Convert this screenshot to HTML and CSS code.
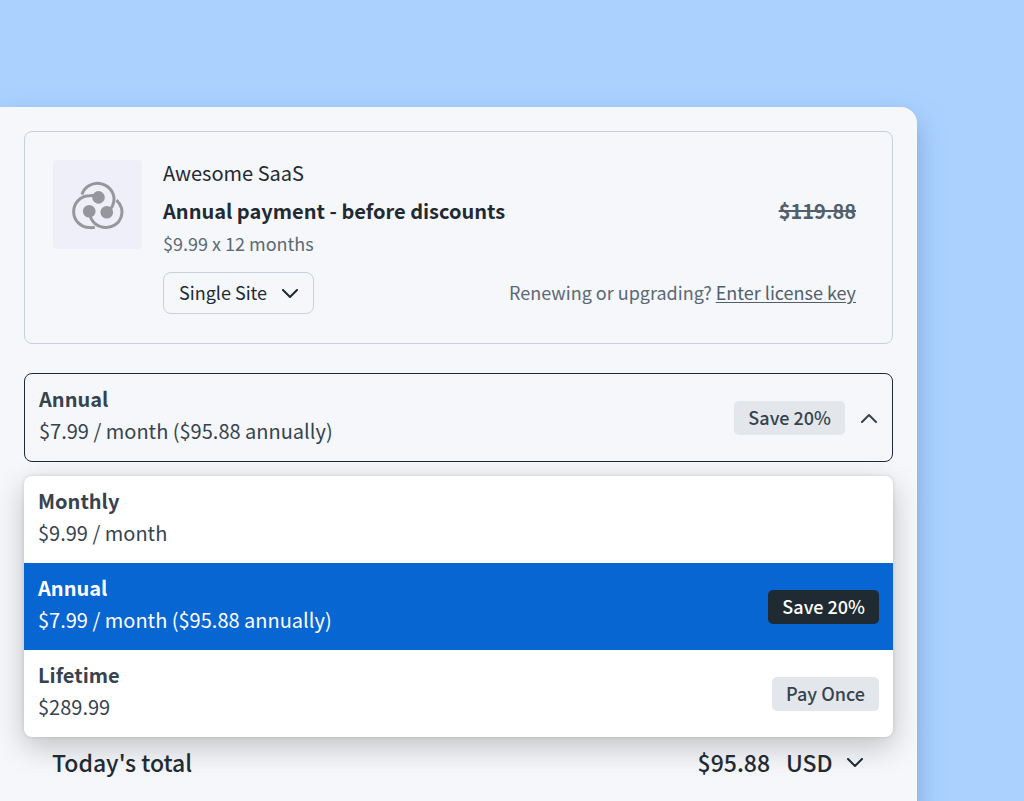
FILE: index.html
```html
<!DOCTYPE html>
<html lang="en">
<head>
    <meta charset="UTF-8">
    <meta name="viewport" content="width=device-width, initial-scale=1.0">
    <title>Checkout - Awesome SaaS</title>
    <link rel="stylesheet" href="styles.css">
</head>
<body>
    <main class="checkout">
        <!-- Product summary -->
        <section class="product">
            <div class="product-logo">
                <svg viewBox="26 26 160 156" width="53" height="52" fill="none" stroke="#96969e" stroke-width="9" aria-hidden="true">
                    <path d="M59 72A50 50 0 0 1 156 84C156 103 148 116 135 125"/>
                    <path d="M108 80C100 75 90 75 82 76A48 48 0 0 0 82 172Q90 173 98 171"/>
                    <path d="M82 125C84 155 105 172 132 172A47 47 0 0 0 163 89"/>
                    <g fill="#96969e" stroke="none">
                        <circle cx="109" cy="81" r="19"/>
                        <circle cx="81" cy="123" r="19"/>
                        <circle cx="134" cy="126" r="19"/>
                    </g>
                </svg>
            </div>
            <div class="product-info">
                <p class="product-name">Awesome SaaS</p>
                <div class="row product-payment">
                    <h2>Annual payment - before discounts</h2>
                    <s>$119.88</s>
                </div>
                <p class="product-note">$9.99 x 12 months</p>
                <div class="row product-license">
                    <div class="select">
                        <select aria-label="License">
                            <option>Single Site</option>
                        </select>
                        <svg class="chevron" viewBox="0 0 18 10" aria-hidden="true"><path d="M2 1l7 7 7-7"/></svg>
                    </div>
                    <p>Renewing or upgrading? <a href="#license">Enter license key</a></p>
                </div>
            </div>
        </section>

        <!-- Billing cycle picker -->
        <section class="cycle">
            <button class="cycle-toggle" type="button" aria-haspopup="listbox" aria-expanded="true" aria-controls="cycles">
                <span class="plan"><strong>Annual</strong><span>$7.99 / month ($95.88 annually)</span></span>
                <span class="badge">Save 20%</span>
                <svg class="chevron" viewBox="0 0 18 10" aria-hidden="true"><path d="M2 9l7-7 7 7"/></svg>
            </button>
            <div class="cycle-menu" id="cycles" role="listbox" aria-label="Billing cycle">
                <button class="cycle-option" type="button" role="option" aria-selected="false">
                    <span class="plan"><strong>Monthly</strong><span>$9.99 / month</span></span>
                </button>
                <button class="cycle-option selected" type="button" role="option" aria-selected="true">
                    <span class="plan"><strong>Annual</strong><span>$7.99 / month ($95.88 annually)</span></span>
                    <span class="badge">Save 20%</span>
                </button>
                <button class="cycle-option" type="button" role="option" aria-selected="false">
                    <span class="plan"><strong>Lifetime</strong><span>$289.99</span></span>
                    <span class="badge">Pay Once</span>
                </button>
            </div>
        </section>

        <!-- Total -->
        <section class="total">
            <h2>Today's total</h2>
            <span class="amount">$95.88</span>
            <div class="select currency">
                <select aria-label="Currency">
                    <option>USD</option>
                </select>
                <svg class="chevron" viewBox="0 0 18 10" aria-hidden="true"><path d="M2 1l7 7 7-7"/></svg>
            </div>
        </section>
    </main>
</body>
</html>
```
FILE: styles.css
```css
* { box-sizing: border-box; }

body {
    margin: 0;
    min-height: 100vh;
    padding: 107px 107px 0 0;
    display: flex;
    overflow: hidden;
    background: #abd2ff;
    color: #36434f;
    font-family: "Noto Sans CJK SC", "Open Sans", sans-serif;
    font-size: 20px;
    line-height: 32px;
}

h2, p { margin: 0; font-size: inherit; }

button, select { font: inherit; color: inherit; }

.checkout {
    flex: 1;
    padding: 24px;
    background: #f5f7fa;
    border-radius: 0 16px 0 0;
    box-shadow: 0 12px 28px rgba(50, 80, 130, 0.35);
}

.row {
    display: flex;
    align-items: center;
    justify-content: space-between;
}

/* Product summary */
.product {
    display: flex;
    gap: 21px;
    padding: 28px 36px 29px 28px;
    border: 1px solid #c9d1d9;
    border-radius: 8px;
}

.product-logo {
    display: grid;
    place-items: center;
    width: 89px;
    height: 89px;
    background: #efeff9;
    border-radius: 4px;
}

.product-info { flex: 1; }

.product-name { line-height: 26px; color: #1f2a33; }

.product-payment { margin-top: 9px; }
.product-payment h2 { font-weight: 700; color: #1f2a33; }

.product-payment s {
    font-weight: 700;
    color: #51606c;
    text-decoration-thickness: 2px;
}

.product-note { font-size: 18px; color: #5b6975; }

.product-license {
    margin-top: 13px;
    font-size: 18px;
    color: #5b6975;
}

.product-license p { padding-bottom: 2px; }

.product-license a {
    color: #51606c;
    text-underline-offset: 2px;
}

.select { position: relative; color: #1f2a33; }

.select select {
    appearance: none;
    height: 42px;
    padding: 0 45px 2px 15px;
    background: transparent;
    border: 1px solid #c9d1d9;
    border-radius: 8px;
}

.chevron {
    width: 18px;
    height: 10px;
    fill: none;
    stroke: currentColor;
    stroke-width: 2;
    stroke-linecap: round;
    stroke-linejoin: round;
}

.select .chevron {
    position: absolute;
    top: 17px;
    right: 15px;
    pointer-events: none;
}

/* Billing cycle picker */
.cycle { margin-top: 29px; }

.cycle-toggle, .cycle-option {
    display: flex;
    align-items: center;
    width: 100%;
    padding: 0 14px;
    border: none;
    background: none;
    text-align: left;
    cursor: pointer;
}

.cycle-toggle {
    border: 1px solid #1f2a33;
    border-radius: 8px;
}

.cycle-toggle .chevron { margin-left: 15px; }

.cycle-menu {
    margin-top: 14px;
    background: #fff;
    border-radius: 8px;
    box-shadow: 0 10px 30px rgba(0, 0, 0, 0.22), 0 0 4px rgba(0, 0, 0, 0.12);
}

.cycle-option.selected {
    background: #0866d2;
    color: #fff;
}

.plan { flex: 1; padding: 9px 0 14px; }
.plan strong, .plan span { display: block; }
.plan strong { font-weight: 700; }

.badge {
    padding: 0 14px 2px;
    line-height: 32px;
    border-radius: 5px;
    background: #e3e7ec;
    color: #36434f;
    font-size: 18px;
    font-weight: 500;
}

.selected .badge {
    background: #1f2a33;
    color: #fff;
}

/* Total */
.total {
    display: flex;
    align-items: center;
    padding: 4px 28px;
    font-size: 23px;
    font-weight: 500;
    color: #1f2a33;
}

.total h2 { flex: 1; font-weight: 500; }

.currency { margin-left: 16px; }

.currency select {
    padding: 0 32px 0 0;
    border: none;
}

.currency .chevron { right: 1px; }
```
